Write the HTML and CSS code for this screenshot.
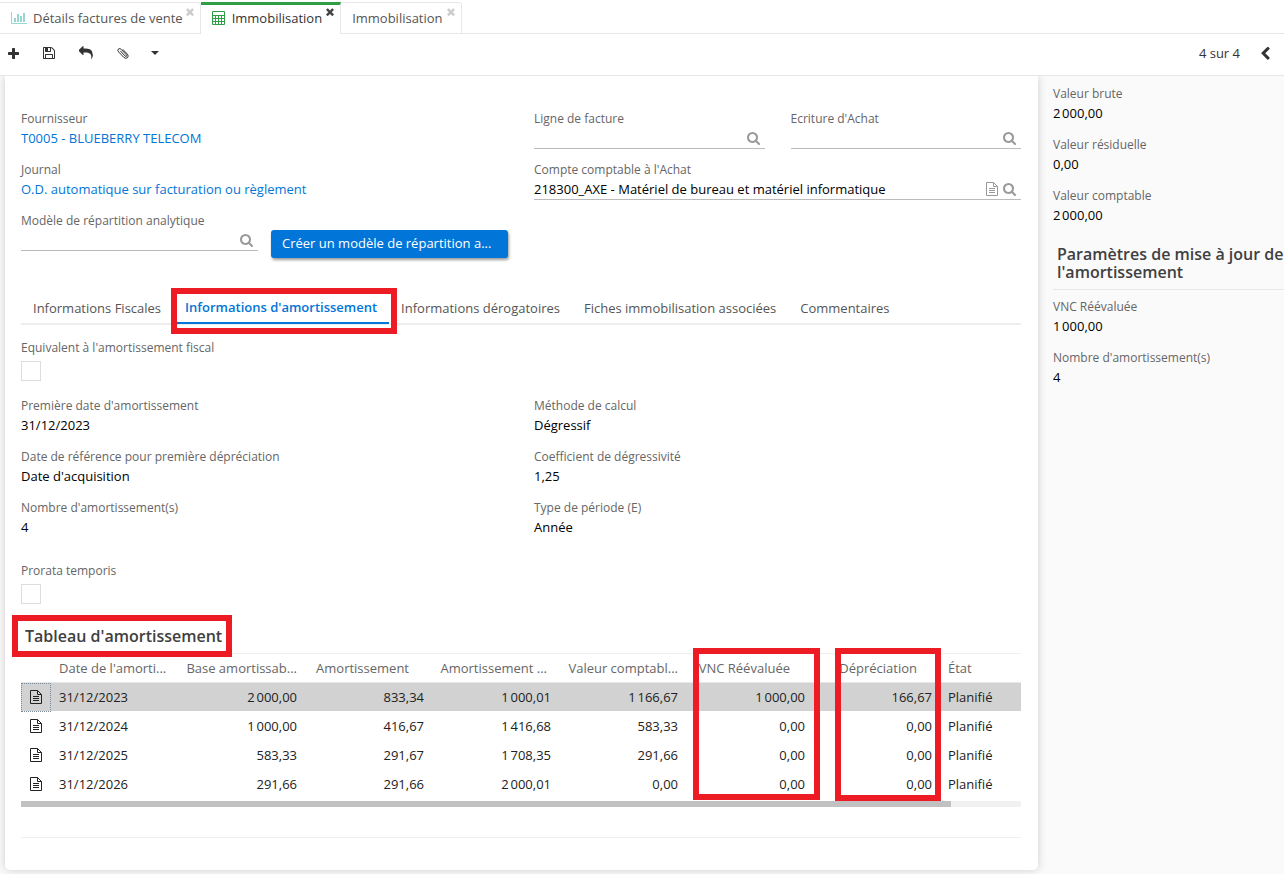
FILE: index.html
```html
<!DOCTYPE html>
<html lang="fr">
<head>
<meta charset="utf-8">
<title>Immobilisation</title>
<link rel="stylesheet" href="styles.css">
</head>
<body>
<svg class="defs" aria-hidden="true">
  <symbol id="search" viewBox="64 128 1664 1664"><path d="M1216 832q0-185-131.500-316.500t-316.500-131.500-316.500 131.500-131.500 316.500 131.500 316.500 316.500 131.500 316.500-131.500 131.500-316.500zm512 832q0 52-38 90t-90 38q-54 0-90-38l-343-342q-179 124-399 124-143 0-273.500-55.500t-225-150-150-225-55.500-273.500 55.500-273.500 150-225 225-150 273.500-55.500 273.500 55.500 225 150 150 225 55.500 273.500q0 220-124 399l343 343q37 37 37 90z"/></symbol>
  <symbol id="close" viewBox="302 302 1188 1252"><path d="M1490 1322q0 40-28 68l-136 136q-28 28-68 28t-68-28l-294-294-294 294q-28 28-68 28t-68-28l-136-136q-28-28-28-68t28-68l294-294-294-294q-28-28-28-68t28-68l136-136q28-28 68-28t68 28l294 294 294-294q28-28 68-28t68 28l136 136q28 28 28 68t-28 68l-294 294 294 294q28 28 28 68z"/></symbol>
  <symbol id="file" viewBox="0 0 12 14"><path d="M.5.5h7l4 4v9H.5zM7.500.500v4h4M3 6.500h6M3 8.500h6M3 10.500h6" fill="none" stroke="currentColor"/></symbol>
</svg>

<nav class="tabs">
  <div class="tab">
    <svg class="tab-icon chart" viewBox="0 0 16 12"><path d="M.5 0v11.500H16" fill="none" stroke="currentColor"/><path d="M3 6h2v4H3zM6 2h2v8H6zM9 4h2v6H9zM12 1h2v9h-2z"/></svg>
    <a href="#">Détails factures de vente</a>
    <button class="close" aria-label="Fermer"><svg><use href="#close"/></svg></button>
  </div>
  <div class="tab active">
    <svg class="tab-icon calc" viewBox="0 0 13 14"><path d="M.5.5h12v13H.5zM0 4.500h13M0 7.500h13M0 10.500h13M3.500 4v10M6.500 4v10M9.500 4v10" fill="none" stroke="currentColor"/></svg>
    <a href="#">Immobilisation</a>
    <button class="close" aria-label="Fermer"><svg><use href="#close"/></svg></button>
  </div>
  <div class="tab">
    <a href="#">Immobilisation</a>
    <button class="close" aria-label="Fermer"><svg><use href="#close"/></svg></button>
  </div>
</nav>

<header class="toolbar">
  <div class="tools">
    <button aria-label="Nouveau"><svg class="i11" viewBox="192 128 1408 1408"><path d="M1600 736v192q0 40-28 68t-68 28h-416v416q0 40-28 68t-68 28h-192q-40 0-68-28t-28-68v-416h-416q-40 0-68-28t-28-68v-192q0-40 28-68t68-28h416v-416q0-40 28-68t68-28h192q40 0 68 28t28 68v416h416q40 0 68 28t28 68z"/></svg></button>
    <button aria-label="Enregistrer"><svg class="i12" viewBox="128 128 1536 1536"><path d="M512 1536h768v-384h-768v384zm896 0h128v-896q0-14-10-38.500t-20-34.500l-281-281q-10-10-34-20t-39-10v416q0 40-28 68t-68 28h-576q-40 0-68-28t-28-68v-416h-128v1280h128v-416q0-40 28-68t68-28h832q40 0 68 28t28 68v416zm-384-928v-320q0-13-9.500-22.500t-22.500-9.500h-192q-13 0-22.500 9.500t-9.500 22.500v320q0 13 9.500 22.500t22.500 9.500h192q13 0 22.500-9.500t9.500-22.500zm640 32v928q0 40-28 68t-68 28h-1344q-40 0-68-28t-28-68v-1344q0-40 28-68t68-28h928q40 0 88 20t76 48l280 280q28 28 48 76t20 88z"/></svg></button>
    <button aria-label="Annuler"><svg class="i14" viewBox="0 0 1792 1792"><path d="M1792 1120q0 166-127 451-3 7-10.500 24t-13.500 30-13 22q-12 17-28 17-15 0-23.500-10t-8.500-25q0-9 2.500-26.500t2.500-23.500q5-68 5-123 0-112-19.500-200.500t-54-153.500-89-112-115.500-78-143.500-46.500-164.500-23-189-6.500h-224v256q0 26-19 45t-45 19-45-19l-512-512q-19-19-19-45t19-45l512-512q19-19 45-19t45 19 19 45v256h224q713 0 875 403 53 134 53 333z"/></svg></button>
    <button aria-label="Pièces jointes"><svg class="i12" viewBox="0 0 12 12"><path d="M3.300 3.900 8 8.900q.9.900 1.500.300.500-.600-.200-1.400L4.400 2.500Q2.900.9 1.500 1.900.1 3.200 1.600 4.900l5.200 5.500q2 1.700 3.700.300 1.500-1.700-.1-3.500L5.800 2.300" fill="none" stroke="currentColor"/></svg></button>
    <button aria-label="Plus d'actions"><svg class="caret" viewBox="0 0 8 4"><path d="M0 0h8L4 4z"/></svg></button>
  </div>
  <div class="pager">
    <span>4 sur 4</span>
    <button aria-label="Précédent"><svg class="chev" viewBox="384 64 1088 1600"><path d="M1427 301l-531 531 531 531q19 19 19 45t-19 45l-166 166q-19 19-45 19t-45-19l-742-742q-19-19-19-45t19-45l742-742q19-19 45-19t45 19l166 166q19 19 19 45t-19 45z"/></svg></button>
  </div>
</header>

<div class="body">
<main class="card">
  <form class="form">
    <section class="halves">
      <div class="stack">
        <div class="field"><span class="label">Fournisseur</span><a class="value" href="#">T0005 - BLUEBERRY TELECOM</a></div>
        <div class="field"><span class="label">Journal</span><a class="value" href="#">O.D. automatique sur facturation ou règlement</a></div>
        <div class="pair tight">
          <div class="field"><label class="label" for="modele">Modèle de répartition analytique</label>
            <div class="lookup"><input id="modele" type="text"><button type="button" aria-label="Rechercher"><svg class="i13"><use href="#search"/></svg></button></div></div>
          <button class="primary" type="button">Créer un modèle de répartition a...</button>
        </div>
      </div>
      <div class="stack">
        <div class="pair">
          <div class="field"><label class="label" for="ligne">Ligne de facture</label>
            <div class="lookup"><input id="ligne" type="text"><button type="button" aria-label="Rechercher"><svg class="i13"><use href="#search"/></svg></button></div></div>
          <div class="field"><label class="label" for="ecriture">Ecriture d'Achat</label>
            <div class="lookup"><input id="ecriture" type="text"><button type="button" aria-label="Rechercher"><svg class="i13"><use href="#search"/></svg></button></div></div>
        </div>
        <div class="field"><label class="label" for="compte">Compte comptable à l'Achat</label>
          <div class="lookup"><input id="compte" type="text" value="218300_AXE - Matériel de bureau et matériel informatique"><button type="button" aria-label="Ouvrir"><svg class="doc"><use href="#file"/></svg></button><button type="button" aria-label="Rechercher"><svg class="i13"><use href="#search"/></svg></button></div></div>
      </div>
    </section>

    <nav class="subtabs">
      <a href="#">Informations Fiscales</a>
      <a href="#" class="current">Informations d'amortissement<span class="mark mark-tab"></span></a>
      <a href="#">Informations dérogatoires</a>
      <a href="#">Fiches immobilisation associées</a>
      <a href="#">Commentaires</a>
    </nav>

    <div class="check"><label class="label" for="equiv">Equivalent à l'amortissement fiscal</label><input id="equiv" type="checkbox"></div>
    <section class="halves details">
      <div class="stack">
        <div class="field"><span class="label">Première date d'amortissement</span><span class="value">31/12/2023</span></div>
        <div class="field"><span class="label">Date de référence pour première dépréciation</span><span class="value">Date d'acquisition</span></div>
        <div class="field"><span class="label">Nombre d'amortissement(s)</span><span class="value">4</span></div>
      </div>
      <div class="stack">
        <div class="field"><span class="label">Méthode de calcul</span><span class="value">Dégressif</span></div>
        <div class="field"><span class="label">Coefficient de dégressivité</span><span class="value">1,25</span></div>
        <div class="field"><span class="label">Type de période (E)</span><span class="value">Année</span></div>
      </div>
    </section>
    <div class="check"><label class="label" for="prorata">Prorata temporis</label><input id="prorata" type="checkbox"></div>

    <section class="schedule">
      <h2>Tableau d'amortissement</h2><span class="mark mark-title"></span>
      <table>
        <colgroup><col class="c-icon"><col class="c"><col class="c"><col class="c"><col class="c"><col class="c"><col class="c"><col class="c"><col></colgroup>
        <thead><tr><th></th><th>Date de l'amorti...</th><th class="num">Base amortissab...</th><th class="num sort">Amortissement</th><th class="num clip">Amortissement ...</th><th class="num">Valeur comptabl...</th><th class="num sort">VNC Réévaluée</th><th class="num sort">Dépréciation</th><th>État</th></tr></thead>
        <tbody>
          <tr class="selected"><td class="open"><svg class="doc"><use href="#file"/></svg></td><td>31/12/2023</td><td class="num">2&#8239;000,00</td><td class="num">833,34</td><td class="num">1&#8239;000,01</td><td class="num">1&#8239;166,67</td><td class="num">1&#8239;000,00</td><td class="num">166,67</td><td>Planifié</td></tr>
          <tr><td class="open"><svg class="doc"><use href="#file"/></svg></td><td>31/12/2024</td><td class="num">1&#8239;000,00</td><td class="num">416,67</td><td class="num">1&#8239;416,68</td><td class="num">583,33</td><td class="num">0,00</td><td class="num">0,00</td><td>Planifié</td></tr>
          <tr><td class="open"><svg class="doc"><use href="#file"/></svg></td><td>31/12/2025</td><td class="num">583,33</td><td class="num">291,67</td><td class="num">1&#8239;708,35</td><td class="num">291,66</td><td class="num">0,00</td><td class="num">0,00</td><td>Planifié</td></tr>
          <tr><td class="open"><svg class="doc"><use href="#file"/></svg></td><td>31/12/2026</td><td class="num">291,66</td><td class="num">291,66</td><td class="num">2&#8239;000,01</td><td class="num">0,00</td><td class="num">0,00</td><td class="num">0,00</td><td>Planifié</td></tr>
        </tbody>
      </table>
      <div class="scroll"><div class="thumb"></div></div>
      <span class="mark mark-vnc"></span><span class="mark mark-dep"></span>
    </section>
  </form>
</main>

<aside class="side">
  <div class="field"><span class="label">Valeur brute</span><span class="value">2&#8239;000,00</span></div>
  <div class="field"><span class="label">Valeur résiduelle</span><span class="value">0,00</span></div>
  <div class="field"><span class="label">Valeur comptable</span><span class="value">2&#8239;000,00</span></div>
  <h2>Paramètres de mise à jour de l'amortissement</h2>
  <div class="field"><span class="label">VNC Réévaluée</span><span class="value">1&#8239;000,00</span></div>
  <div class="field"><span class="label">Nombre d'amortissement(s)</span><span class="value">4</span></div>
</aside>
</div>
</body>
</html>
```

FILE: styles.css
```css
* { box-sizing: border-box; }
html, body { height: 100%; }
body {
  margin: 0;
  display: flex;
  flex-direction: column;
  font: 13px/20px "Open Sans", "Noto Sans", sans-serif;
  color: #333;
  background: #fff;
  overflow: hidden;
}
svg { display: block; fill: currentColor; }
.defs { position: absolute; width: 0; height: 0; }
a { color: inherit; text-decoration: none; }
button { border: 0; padding: 0; background: none; color: inherit; font: inherit; }
h2 { margin: 0; font-size: 16px; line-height: 18px; font-weight: 600; color: #404040; }

.tabs { display: flex; padding-top: 2px; background: linear-gradient(#e7e7e7, #e7e7e7) bottom / 100% 1px no-repeat; }
.tab {
  display: flex;
  height: 32px;
  padding: 5px 6px 0 11px;
  border: 1px solid #e7e7e7;
  border-left: 0;
  border-top-right-radius: 3px;
  color: #555;
}
.tab.active { border-top: 3px solid #2f9e44; border-bottom-color: #fff; border-radius: 0; padding-top: 3px; color: #333; }
.tab-icon { margin-right: 6px; }
.chart { width: 16px; height: 12px; margin-top: 4px; color: #96d9d2; }
.calc { width: 13px; height: 14px; margin-top: 3px; margin-right: 7px; color: #2f9e44; }
.close { width: 8px; height: 8px; margin-left: 4px; color: #ccc; }
.tab:first-child .close { margin-left: 3px; }
.close svg { width: 8px; height: 8px; }
.active .close { color: #444; }

.toolbar {
  display: flex;
  justify-content: space-between;
  align-items: center;
  height: 42px;
  padding: 0 14px 3px 8px;
  border-bottom: 1px solid #e7e7e7;
}
.tools { display: flex; align-items: center; gap: 24px; }
.tools button:last-child { margin-left: -2px; }
.pager { display: flex; align-items: center; gap: 21px; }
.i11 { width: 11px; height: 11px; }
.i12 { width: 12px; height: 12px; }
.i13 { width: 13px; height: 13px; }
.i14 { width: 14px; height: 14px; }
.caret { width: 8px; height: 4px; }
.chev { width: 9px; height: 13px; }
.doc { width: 12px; height: 14px; }

.body { flex: 1; display: flex; background: #fafafa; overflow: hidden; }
.card {
  flex: 1;
  align-self: flex-start;
  margin-left: 5px;
  padding: 33px 17px 32px 16px;
  background: #fff;
  border-radius: 0 0 5px 5px;
  box-shadow: 0 0 10px rgba(0, 0, 0, .18);
}
.halves { display: grid; grid-template-columns: 1fr 1fr; gap: 26px; }
.stack { display: flex; flex-direction: column; gap: 9px; }
.pair { display: grid; grid-template-columns: 1fr 1fr; gap: 26px; }
.tight { gap: 13px; }
.field { display: flex; flex-direction: column; height: 42px; }
.label { font-size: 12px; line-height: 19px; color: #666; }
.value { line-height: 20px; color: #000; }
a.value { color: #0275d8; }
.lookup { display: flex; align-items: center; gap: 5px; height: 21px; padding-right: 5px; border-bottom: 1px solid #bbb; color: #999; }
.lookup input { flex: 1; min-width: 0; height: 20px; padding: 0; border: 0; outline: 0; background: none; font: inherit; color: #000; }
.primary {
  align-self: end;
  height: 28px;
  margin-bottom: -5px;
  padding: 0 11px 2px;
  border-radius: 3px;
  background: #0275d8;
  box-shadow: 1px 2px 3px rgba(0, 0, 0, .4);
  color: #fff;
  text-align: left;
  white-space: nowrap;
}

.subtabs { display: flex; margin: 41px 0 13px; border-bottom: 2px solid #eee; color: #555; }
.subtabs a { position: relative; height: 29px; padding: 4px 12px 0; white-space: nowrap; }
.subtabs .current { height: 30px; margin-bottom: -1px; padding-top: 3px; border-bottom: 2px solid #0275d8; font-weight: 600; color: #0275d8; }
.check { display: flex; flex-direction: column; gap: 4px; }
.check input { appearance: none; width: 20px; height: 20px; margin: 0; border: 1px solid #ddd; background: #fff; }
.details { margin: 15px 0 21px; }

.schedule { position: relative; margin-top: 14px; padding-bottom: 30px; border-bottom: 1px solid #eee; }
.schedule h2 { padding: 9px 4px 8px; border-bottom: 1px solid #eee; }
table { width: 100%; table-layout: fixed; border-collapse: separate; border-spacing: 0; color: #222; }
.c-icon { width: 30px; }
.c { width: 127px; }
th, td { height: 29px; padding: 0 8px; font-weight: 400; text-align: left; white-space: nowrap; overflow: hidden; border-bottom: 1px solid #fff; }
th { border-bottom-color: #e7e7e7; color: #666; }
.num { text-align: right; }
.sort { padding-right: 23px; }
.clip { padding-right: 12px; }
.open { padding: 0 0 0 9px; }
.selected td { background: #d2d2d2; }
.selected .open { outline: 1px dotted #789; outline-offset: -1px; }
.scroll { height: 6px; margin-top: 2px; background: #f1f1f1; }
.thumb { width: 93%; height: 6px; background: #c1c1c1; }

.mark { position: absolute; border: 6px solid #ed1c24; pointer-events: none; }
.mark-tab { inset: -6px -8px -12px -2px; }
.mark-title { top: -3px; left: -9px; width: 220px; height: 42px; }
.mark-vnc { top: 30px; left: 672px; width: 127px; height: 152px; }
.mark-dep { top: 30px; left: 814px; width: 106px; height: 153px; }

.side { width: 246px; padding: 8px 0 0 15px; }
.side .field { margin-bottom: 9px; }
.side h2 { margin: 17px 0 7px; padding: 0 0 8px 4px; border-bottom: 1px solid #e7e7e7; }
```
